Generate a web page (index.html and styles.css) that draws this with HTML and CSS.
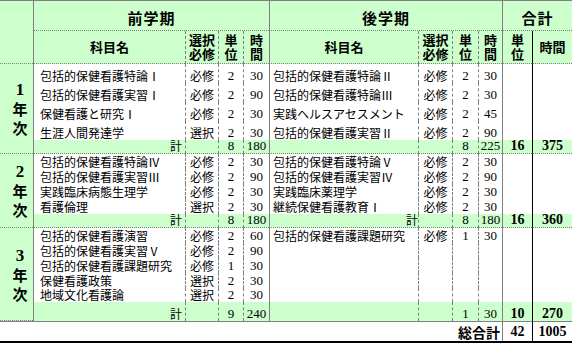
FILE: index.html
```html
<!DOCTYPE html>
<html lang="ja">
<head>
<meta charset="utf-8">
<title>カリキュラム</title>
<link rel="stylesheet" href="styles.css">
</head>
<body>
<div class="sheet">
  <!-- header row 1 -->
  <div class="c hd yearhead"></div>
  <div class="c hd h1 s term">前学期</div>
  <div class="c hd h1 s term">後学期</div>
  <div class="c hd h1 s total">合計</div>
  <!-- header row 2 -->
  <div class="c hd h2 s">科目名</div>
  <div class="c hd h2 d">選択<br>必修</div>
  <div class="c hd h2 d">単<br>位</div>
  <div class="c hd h2 d">時<br>間</div>
  <div class="c hd h2 s">科目名</div>
  <div class="c hd h2 d">選択<br>必修</div>
  <div class="c hd h2 d">単<br>位</div>
  <div class="c hd h2 d">時<br>間</div>
  <div class="c hd h2 s">単<br>位</div>
  <div class="c hd h2 k">時間</div>

  <!-- 1年次 -->
  <div class="c year span5"><span class="yn">1</span><span>年</span><span>次</span></div>
  <div class="c name s">包括的保健看護特論Ⅰ</div><div class="c req d">必修</div><div class="c num d">2</div><div class="c num d">30</div>
  <div class="c name nr s">包括的保健看護特論Ⅱ</div><div class="c req d">必修</div><div class="c num d">2</div><div class="c num d">30</div>
  <div class="c s rows4"></div><div class="c k rows4"></div>

  <div class="c name s">包括的保健看護実習Ⅰ</div><div class="c req d">必修</div><div class="c num d">2</div><div class="c num d">90</div>
  <div class="c name nr s">包括的保健看護特論Ⅲ</div><div class="c req d">必修</div><div class="c num d">2</div><div class="c num d">30</div>

  <div class="c name s">保健看護と研究Ⅰ</div><div class="c req d">必修</div><div class="c num d">2</div><div class="c num d">30</div>
  <div class="c name nr s">実践ヘルスアセスメント</div><div class="c req d">必修</div><div class="c num d">2</div><div class="c num d">45</div>

  <div class="c name s">生涯人間発達学</div><div class="c req d">選択</div><div class="c num d">2</div><div class="c num d">30</div>
  <div class="c name nr s">包括的保健看護実習Ⅱ</div><div class="c req d">必修</div><div class="c num d">2</div><div class="c num d">90</div>

  <div class="c g sl s sep">計</div><div class="c g d sep"></div><div class="c g num d sep">8</div><div class="c g num d sep">180</div>
  <div class="c g s sep"></div><div class="c g d sep"></div><div class="c g num d sep">8</div><div class="c g num d sep">225</div>
  <div class="c g tot s sep">16</div><div class="c g tot k sep">375</div>

  <!-- 2年次 -->
  <div class="c year span5"><span class="yn">2</span><span>年</span><span>次</span></div>
  <div class="c name s">包括的保健看護特論Ⅳ</div><div class="c req d">必修</div><div class="c num d">2</div><div class="c num d">30</div>
  <div class="c name nr s">包括的保健看護特論Ⅴ</div><div class="c req d">必修</div><div class="c num d">2</div><div class="c num d">30</div>
  <div class="c s rows4"></div><div class="c k rows4"></div>

  <div class="c name s">包括的保健看護実習Ⅲ</div><div class="c req d">必修</div><div class="c num d">2</div><div class="c num d">90</div>
  <div class="c name nr s">包括的保健看護実習Ⅳ</div><div class="c req d">必修</div><div class="c num d">2</div><div class="c num d">90</div>

  <div class="c name s">実践臨床病態生理学</div><div class="c req d">必修</div><div class="c num d">2</div><div class="c num d">30</div>
  <div class="c name nr s">実践臨床薬理学</div><div class="c req d">必修</div><div class="c num d">2</div><div class="c num d">30</div>

  <div class="c name s">看護倫理</div><div class="c req d">選択</div><div class="c num d">2</div><div class="c num d">30</div>
  <div class="c name nr s">継続保健看護教育Ⅰ</div><div class="c req d">必修</div><div class="c num d">2</div><div class="c num d">30</div>

  <div class="c g sl s sep">計</div><div class="c g d sep"></div><div class="c g num d sep">8</div><div class="c g num d sep">180</div>
  <div class="c g sl slr s sep">計</div><div class="c g d sep"></div><div class="c g num d sep">8</div><div class="c g num d sep">180</div>
  <div class="c g tot s sep">16</div><div class="c g tot k sep">360</div>

  <!-- 3年次 -->
  <div class="c year span6"><span class="yn">3</span><span>年</span><span>次</span></div>
  <div class="c name s">包括的保健看護演習</div><div class="c req d">必修</div><div class="c num d">2</div><div class="c num d">60</div>
  <div class="c name nr s">包括的保健看護課題研究</div><div class="c req d">必修</div><div class="c num d">1</div><div class="c num d">30</div>
  <div class="c s rows5"></div><div class="c k rows5"></div>

  <div class="c name s">包括的保健看護実習Ⅴ</div><div class="c req d">必修</div><div class="c num d">2</div><div class="c num d">90</div>
  <div class="c s"></div><div class="c d"></div><div class="c d"></div><div class="c d"></div>

  <div class="c name s">包括的保健看護課題研究</div><div class="c req d">必修</div><div class="c num d">1</div><div class="c num d">30</div>
  <div class="c s"></div><div class="c d"></div><div class="c d"></div><div class="c d"></div>

  <div class="c name s">保健看護政策</div><div class="c req d">選択</div><div class="c num d">2</div><div class="c num d">30</div>
  <div class="c s"></div><div class="c d"></div><div class="c d"></div><div class="c d"></div>

  <div class="c name s">地域文化看護論</div><div class="c req d">選択</div><div class="c num d">2</div><div class="c num d">30</div>
  <div class="c s"></div><div class="c d"></div><div class="c d"></div><div class="c d"></div>

  <div class="c g sl s">計</div><div class="c g d"></div><div class="c g num d">9</div><div class="c g num d">240</div>
  <div class="c g s"></div><div class="c g d"></div><div class="c g num d">1</div><div class="c g num d">30</div>
  <div class="c g tot s">10</div><div class="c g tot k">270</div>

  <!-- 総合計 -->
  <div class="c grand top">総合計</div>
  <div class="c tot s top">42</div>
  <div class="c tot k top">1005</div>
</div>
</body>
</html>
```

FILE: styles.css
```css
html, body {
  margin: 0;
  padding: 0;
  background: #ffffff;
}

.sheet {
  display: grid;
  grid-template-columns: 33px 152px 33px 25px 26px 149px 34px 26px 24px 30px 40px;
  grid-template-rows:
    30px 33px
    19px 19px 19px 19px 14px
    15px 15px 15px 15px 14px
    15px 15px 15px 15px 14px 19px
    20px;
  width: 572px;
  border-top: 1px solid #808080;
  border-bottom: 2px solid #000000;
  font-family: "Noto Sans CJK JP", sans-serif;
  font-size: 12px;
  color: #000000;
}

.c {
  box-sizing: border-box;
  display: flex;
  align-items: flex-end;
  line-height: 14px;
  background: #ffffff;
  white-space: nowrap;
  min-width: 0;
}

/* vertical rules */
.s { border-left: 1px solid #808080; }
.d { border-left: 1px dashed #808080; }
.k { border-left: 1px solid #000000; }

/* header */
.hd {
  background: #ccffcc;
  font-weight: bold;
  justify-content: center;
  align-items: center;
  text-align: center;
  border-bottom: 1px dotted #808080;
}
.yearhead { grid-row: span 2; }
.term { grid-column: span 4; }
.total { grid-column: span 2; }
.h1 {
  font-size: 15px;
  letter-spacing: 1px;
  padding-top: 5px;
  line-height: 16px;
}
.h2 {
  font-size: 13px;
  line-height: 14px;
}

/* year label */
.year {
  background: #ccffcc;
  border-bottom: 1px dotted #808080;
  flex-direction: column;
  justify-content: center;
  align-items: center;
  padding-left: 7px;
  font-weight: bold;
  font-size: 15px;
  line-height: 19px;
}
.yn { font-family: "Liberation Serif", serif; font-size: 17px; }
.span5 { grid-row: span 5; }
.span6 { grid-row: span 6; }
.rows4 { grid-row: span 4; }
.rows5 { grid-row: span 5; }

/* body cells */
.name { padding-left: 6px; }
.name.nr { padding-left: 3px; }
.req { justify-content: center; }
.num {
  justify-content: center;
  font-family: "Liberation Serif", serif;
  font-size: 13px;
}
.tot {
  justify-content: center;
  font-family: "Liberation Serif", serif;
  font-weight: bold;
  font-size: 14px;
}

/* sum rows */
.g { background: #ccffcc; }
.sep { border-bottom: 1px dotted #808080; }
.sl { justify-content: flex-end; padding-right: 3px; }
.sl.slr { padding-right: 0; }

/* grand total */
.grand {
  grid-column: span 9;
  justify-content: flex-end;
  padding-right: 2px;
  font-weight: bold;
  font-size: 14px;
  align-items: center;
}
.top { border-top: 1px solid #808080; align-items: center; }
```
